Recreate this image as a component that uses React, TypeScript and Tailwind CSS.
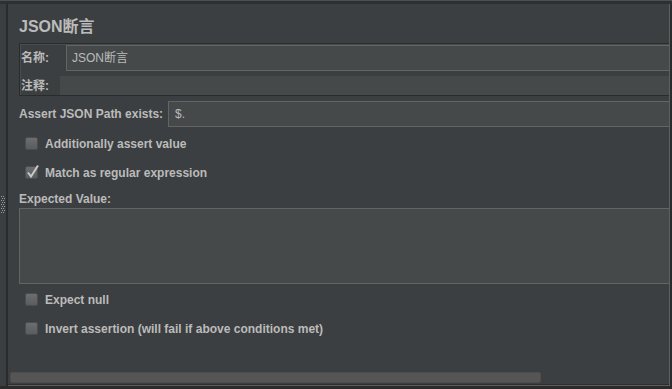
import React from "react";

const font = "font-['Liberation_Sans','Noto_Sans_CJK_SC',sans-serif]";

function CheckBox({ checked, label }: { checked?: boolean; label: string }) {
  return (
    <div className="h-[29px] flex items-center pl-[6px]">
      <span className="relative w-[13px] h-[13px] rounded-[2px] border border-[#4b4d4f] bg-linear-to-b from-[#6b6d6f] to-[#5a5c5e] shrink-0">
        {checked && (
          <svg
            className="absolute left-[0px] top-[-3px]"
            width="14"
            height="15"
            viewBox="0 0 14 15"
          >
            <path
              d="M2 8.5 L5 12.5 L12 1.5"
              fill="none"
              stroke="#c9c9c9"
              strokeWidth="2"
            />
          </svg>
        )}
      </span>
      <span className="ml-[7px] text-[12px] font-bold text-[#bbbbbb] leading-[14px]">
        {label}
      </span>
    </div>
  );
}

export default function App() {
  return (
    <div className={`w-[672px] h-[389px] bg-[#3c3f41] flex flex-col overflow-hidden ${font}`}>
      <div className="h-[1px] bg-[#4d5052]" />
      <div className="h-[3px] bg-[#2d2f31]" />
      <div className="flex flex-1 min-h-0">
        {/* left splitter */}
        <div className="w-[6px] bg-[#3b3e40] flex flex-col items-center">
          <svg className="mt-[192px]" width="4" height="18" viewBox="0 0 4 18">
            {Array.from({ length: 9 }).map((_, r) => (
              <g key={r}>
                <rect x={r % 2 ? 1 : 0} y={r * 2} width="1" height="1" fill="#9a9a9a" />
                <rect x={r % 2 ? 3 : 2} y={r * 2} width="1" height="1" fill="#9a9a9a" />
              </g>
            ))}
          </svg>
        </div>
        <div className="w-[2px] bg-[#2b2b2b]" />

        {/* content */}
        <div className="flex-1 flex flex-col overflow-hidden">
          <div className="flex-1 flex flex-col pl-[11px] text-[#bbbbbb]">
            <div className="pt-[13px] h-[33px] text-[16px] font-bold leading-[20px]">
              JSON断言
            </div>

            {/* name / comment panel */}
            <div className="mt-[6px] h-[53px] border-t border-l border-b border-[#2b2b2b] shadow-[inset_1px_1px_0_#4a4d4f] flex flex-col pt-[1px]">
              <div className="h-[26px] flex items-center">
                <span className="w-[46px] pl-[1px] text-[12px] font-bold">名称:</span>
                <div className="flex-1 h-[26px] bg-[#45494a] border-t border-l border-b border-[#646464] flex items-center pl-[5px] text-[12px]">
                  JSON断言
                </div>
              </div>
              <div className="mt-[5px] h-[19px] flex items-center">
                <span className="w-[40px] pl-[1px] text-[12px] font-bold">注释:</span>
                <div className="flex-1 h-[19px] bg-[#45494a]" />
              </div>
            </div>

            {/* assert path */}
            <div className="mt-[5px] h-[26px] flex items-center">
              <span className="w-[149px] text-[12px] font-bold">Assert JSON Path exists:</span>
              <div className="flex-1 h-[26px] bg-[#45494a] border-t border-l border-b border-[#646464] flex items-center pl-[6px] text-[12px]">
                $.
              </div>
            </div>

            <div className="mt-[2px]">
              <CheckBox label="Additionally assert value" />
              <CheckBox checked label="Match as regular expression" />
            </div>

            <div className="mt-[4px] h-[16px] flex items-center text-[12px] font-bold">
              Expected Value:
            </div>
            <div className="mt-[1px] h-[76px] bg-[#45494a] border-t border-l border-b border-[#646464]" />

            <div className="mt-[1px]">
              <CheckBox label="Expect null" />
              <CheckBox label="Invert assertion (will fail if above conditions met)" />
            </div>
          </div>

          {/* horizontal scrollbar */}
          <div className="h-[13px] flex items-center pl-[2px]">
            <div className="w-[531px] h-[11px] rounded-[2px] bg-[#555555] border border-[#4d4d4d]" />
          </div>
          <div className="h-[1px] bg-[#2d2f31]" />
          <div className="h-[1px] bg-[#5a5d5f]" />
        </div>

        <div className="w-[1px] bg-[#5d6062]" />
        <div className="w-[2px] bg-[#2b2b2b]" />
      </div>
      <div className="h-[3px] bg-[#2b2b2b]" />
    </div>
  );
}
